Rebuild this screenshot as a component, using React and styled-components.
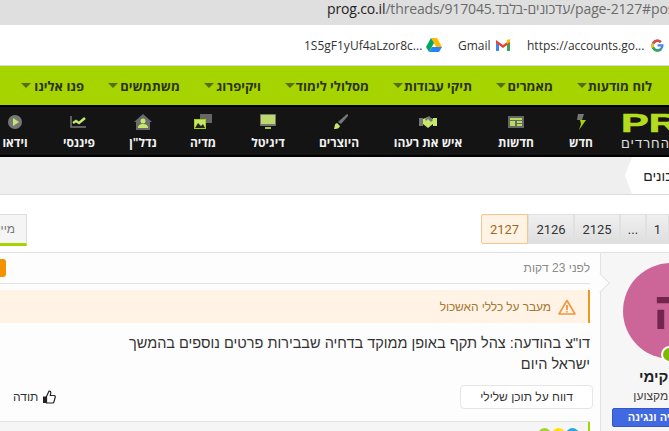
import React from 'react';
import styled, { createGlobalStyle } from 'styled-components';

const Global = createGlobalStyle`
  html, body { margin: 0; padding: 0; background: #fff; overflow: hidden; }
  #root { width: 669px; height: 431px; overflow: hidden; }
`;
const Frame = styled.div`width: 669px; height: 431px; overflow: hidden; font-family: "Liberation Sans", Arial, sans-serif; background: #fff;`;
const Canvas = styled.div`width: 900px; margin-left: -100px;`;
const AddressBar = styled.div`
  height: 25px; background: #dfdfdf; padding-left: 427px; direction: ltr; white-space: nowrap;
  font: 14px/17px "Open Sans", sans-serif; letter-spacing: -0.15px; color: #6a6a6a; overflow: hidden;
  b { font-weight: 400; color: #222; }
`;
const Bookmarks = styled.div`
  height: 41px; box-sizing: border-box; padding-left: 404px; display: flex; align-items: center; direction: ltr; white-space: nowrap;
  border-bottom: 1px solid #d8d8e0; font: 12px "Open Sans", sans-serif; color: #333;
`;
const Bookmark = styled.span`display: flex; align-items: center; margin-right: ${p => p.$mr || 10}px; width: ${p => p.$w}px;`;
const GreenNav = styled.nav`
  height: 39px; background: #a6d400; display: flex; align-items: center; direction: rtl; padding-right: 148px; gap: 24px;
`;
const GreenItem = styled.a`display: flex; align-items: center; width: ${p => p.$w}px; flex: none; font-weight: 700; font-size: 13px; color: #2c3212; white-space: nowrap; font-family: "Open Sans", "Liberation Sans", sans-serif;`;
const Caret = styled.i`width: 0; height: 0; border: 5px solid transparent; border-top: 5px solid #5a6b18; border-bottom: 0; display: block; margin-right: auto;`;
const BlackNav = styled.nav`
  height: 52px; box-sizing: border-box; background: #141414; border-top: 2px solid #000; border-bottom: 2px solid #000;
  display: flex; align-items: center; direction: rtl; padding-right: 131px; overflow: hidden;
`;
const Logo = styled.div`width: 48px; margin-left: 10px; flex: none; direction: ltr; padding-top: 3px;`;
const LogoMark = styled.div`font: 900 26px/19px "Liberation Sans", sans-serif; color: #b4dc1e; -webkit-text-stroke: 0.6px #b4dc1e; letter-spacing: 0; transform: scaleX(1.6); transform-origin: left; white-space: nowrap;`;
const LogoSub = styled.div`font: 13px/15px "Liberation Sans", sans-serif; color: #e0e0e0; letter-spacing: 1px; margin-top: 3px; white-space: nowrap;`;
const BlackItem = styled.a`display: flex; flex-direction: column; align-items: center; gap: 6px; width: ${p => p.$w}px; flex: none; color: #f2f2f2; font-weight: 700; font-size: 12px; line-height: 14px; white-space: nowrap; padding-top: 2px; font-family: "Open Sans", "Liberation Sans", sans-serif;`;
const NavIcon = styled.svg`width: 18px; height: 16px; display: block;`;
const Crumbs = styled.div`height: 38px; box-sizing: border-box; background: #efefef; border-bottom: 1px solid #ddd; direction: rtl; padding-right: 105px; display: flex;`;
const Crumb = styled.a`
  height: 37px; box-sizing: border-box; padding: 0 7px 0 0; width: 70px; flex: none; background: #fff; display: flex; align-items: center; font-size: 14px; color: #222; white-space: nowrap;
  clip-path: polygon(0 50%, 7px 0, 100% 0, 100% 100%, 7px 100%);
`;
const PageRow = styled.div`height: 57px; box-sizing: border-box; display: flex; justify-content: space-between; align-items: flex-start; padding: 19px 131px 0 0; direction: ltr;`;
const Tab = styled.div`height: 32px; width: 127px; box-sizing: border-box; direction: rtl; overflow: hidden;
  background: #f5f5f5; border: 1px solid #ddd; border-bottom: 3px solid #a6d400; font-size: 12px; color: #777; padding: 7px 11px 0 0; white-space: nowrap;`;
const Pager = styled.div`display: flex; direction: ltr; height: 30px;`;
const PageCell = styled.a`
  box-sizing: border-box; width: ${p => p.$w}px; height: 30px; display: flex; align-items: center; justify-content: center; font: 13px "Roboto", sans-serif;
  color: ${p => p.$on ? '#a5671f' : '#333'}; background: ${p => p.$on ? '#fff3e6' : 'linear-gradient(#f0f0f0,#dedede)'};
  border: 1px solid ${p => p.$on ? '#f5c78c' : '#e0e0e0'}; ${p => p.$on && 'border-radius: 2px 0 0 2px;'}
`;
const Main = styled.div`display: flex; direction: rtl; border-top: 1px solid #e2e2e2; height: 179px; padding-right: 60px;`;
const Side = styled.aside`width: 140px; flex: none; background: #f6f6f6; border-left: 1px solid #e2e2e2; box-sizing: border-box; display: flex; flex-direction: column; align-items: center; padding-top: 10px;`;
const Avatar = styled.div`width: 96px; height: 96px; border-radius: 50%; background: #cc6699; color: #73264d; display: flex; align-items: center; justify-content: center; font-size: 52px; font-weight: 700; position: relative;`;
const Online = styled.i`position: absolute; left: 38px; bottom: -4px; width: 13px; height: 13px; border-radius: 50%; background: #7fb800; border: 2px solid #fff;`;
const Name = styled.div`font: 700 15px/17px "Liberation Sans", sans-serif; color: #222; margin-top: 9px; white-space: nowrap;`;
const Role = styled.div`font-size: 12px; line-height: 14px; color: #444; margin-top: 4px; white-space: nowrap;`;
const RoleBtn = styled.div`width: 118px; height: 19px; box-sizing: border-box; background: #4169e1; color: #fff; font: 700 11px/17px "Liberation Sans", sans-serif; text-align: center; border-radius: 2px; border: 1px solid #3558c0; margin-top: 5px; white-space: nowrap;`;
const Post = styled.article`flex: 1; min-width: 0; background: #fdfdfd; padding: 0 10px 0 0; direction: rtl; position: relative;`;
const PostHead = styled.div`height: 31px; box-sizing: border-box; border-bottom: 1px solid #e2e2e2; font-size: 12px; color: #8a8a8a; display: flex; align-items: center; justify-content: space-between; position: relative;`;
const Tail = styled.i`position: absolute; right: -17px; top: 23px; width: 14px; height: 14px; box-sizing: border-box; transform: rotate(45deg); background: #fdfdfd; border: 1px solid #e2e2e2; border-left: 0; border-bottom: 0;`;
const Badge = styled.b`width: 27px; height: 18px; background: #f39200; border-radius: 3px; margin-left: 79px; display: block;`;
const Notice = styled.div`margin-top: 6px; height: 33px; background: #fff3e6; border-right: 2px solid #f0961e; display: flex; align-items: center; gap: 7px; padding-right: 12px; font-size: 12px; letter-spacing: -0.1px; color: #a5762f; box-sizing: border-box;`;
const Body = styled.p`margin: 10px 0 0; font: 14.5px/21px "Liberation Sans", sans-serif; color: #333; width: 470px;`;
const Actions = styled.div`display: flex; justify-content: space-between; align-items: center; margin: 10px -3px 0 113px; height: 24px;`;
const ReportBtn = styled.button`width: 133px; height: 24px; background: #fff; border: 1px solid #e6e6e6; border-radius: 4px; font: 12px "Liberation Sans", sans-serif; color: #333; direction: rtl;`;
const Thanks = styled.span`display: flex; align-items: center; gap: 4px; font-size: 12px; color: #333;`;
const Footer = styled.div`margin-top: 12px; height: 20px; background: #f5f5f5; border-top: 1px solid #e2e2e2;`;
const FooterBar = styled.div`height: 20px; border-right: 2px solid #a6d400; display: flex; gap: 1px; padding: 6px 9px 0 0;`;
const Dot = styled.i`width: 13px; height: 13px; border-radius: 50%; background: ${p => p.$c}; display: block;`;

const ICONS = {
  bolt: <><path d="M6 0h6l-2 6H5z" fill="#777"/><path d="M8 6h6l-7 10 2-6z" fill="#a6d400"/></>,
  news: <><rect x="1" y="2" width="16" height="12" fill="#666"/><rect x="3" y="4" width="12" height="2" fill="#b5dc5a"/><rect x="3" y="7" width="5" height="5" fill="#b5dc5a"/><rect x="10" y="7" width="5" height="2" fill="#b5dc5a"/><rect x="10" y="10" width="5" height="2" fill="#b5dc5a"/></>,
  hands: <><rect x="0" y="4" width="4" height="8" fill="#777"/><rect x="14" y="4" width="4" height="8" fill="#c5e86c"/><path d="M4 5l5-2 5 2v5l-5 4-5-4z" fill="#c5e86c"/><path d="M6 5l4-3 4 4-2 2-3-3-2 2z" fill="#777"/></>,
  brush: <><path d="M17 0c1 0 1 1 1 2l-7 8-3-2z" fill="#777"/><path d="M7 9l3 3c-1 3-4 3-6 3 1-2 0-5 3-6z" fill="#c5e86c"/></>,
  screen: <><rect x="1" y="0" width="16" height="12" rx="1" fill="#777"/><rect x="2" y="1" width="14" height="9" fill="#bcd96a"/><rect x="6" y="13" width="6" height="2" fill="#a6c84a"/></>,
  media: <><rect x="6" y="0" width="12" height="9" fill="#666"/><rect x="0.500" y="5.500" width="11" height="9" fill="#c5e86c" stroke="#a6d400"/><path d="M1 14l3-5 3 3 2-2 2 4z" fill="#222"/></>,
  home: <><path d="M9 0 0 8h2v8h14V8h2z" fill="#6b6b6b"/><circle cx="9" cy="7" r="2.500" fill="#c5e86c"/><path d="M4 14c0-3 2-4 5-4s5 1 5 4z" fill="#c5e86c"/></>,
  chart: <><path d="M1 2v11h15" stroke="#777" fill="none" strokeWidth="1.500"/><path d="M3 9l3-2 3 2 6-5" stroke="#c5e86c" fill="none" strokeWidth="2.500"/></>,
  play: <><circle cx="9" cy="8" r="7" fill="#777"/><path d="M7 4l6 4-6 4z" fill="#c5e86c"/></>,
};
const blackItems = [['bolt','חדש',60],['news','חדשות',70],['hands','איש את רעהו',106],['brush','היוצרים',72],['screen','דיגיטל',70],['media','מדיה',60],['home','נדל"ן',60],['chart','פיננסי',68],['play','וידאו',60]];
const greenItems = [['לוח מודעות',75],['מאמרים',57],['תיקי עבודות',79],['מסלולי לימוד',84],['ויקיפרוג',57],['משתמשים',72],['פנו אלינו',63]];

export default function App() {
  return (
    <Frame>
      <Global />
      <Canvas>
        <AddressBar><b>prog.co.il</b>/threads/917045.עדכונים-בלבד/page-2127#post-1</AddressBar>
        <Bookmarks>
          <Bookmark $w={112} $mr={10}>1S5gF1yUf4aLzor8c...</Bookmark>
          <Bookmark $w={16} $mr={16}><svg width="16" height="14" viewBox="0 0 16 14"><path d="M5 0h6l5 9h-6z" fill="#ffba00"/><path d="M5 0 0 9l3 5 5-9z" fill="#00a85d"/><path d="M3 14h10l3-5H6z" fill="#2684fc"/></svg></Bookmark>
          <Bookmark $w={30} $mr={8}>Gmail</Bookmark>
          <Bookmark $w={14} $mr={17}><svg width="14" height="12" viewBox="0 0 14 12"><path d="M0 2v10h3V4z" fill="#4285f4"/><path d="M11 4v8h3V2z" fill="#34a853"/><path d="M0 1 7 6l7-5v3L7 9 0 4z" fill="#ea4335"/><path d="M11 1l3-1v3l-3 2z" fill="#fbbc04"/></svg></Bookmark>
          <Bookmark $w={113} $mr={11}>https://accounts.go...</Bookmark>
          <svg width="13" height="13" viewBox="0 0 13 13"><path d="M6.500 5.300h6c.4 3.800-2 7.200-6 7.200A6 6 0 1 1 10.600 2.200L8.900 3.900A3.600 3.600 0 1 0 10 7.400H6.500z" fill="#4285f4"/><path d="M1.100 3.500A6 6 0 0 1 10.600 2.200L8.900 3.900a3.600 3.600 0 0 0-5.700.900z" fill="#ea4335"/><path d="M.9 9A6 6 0 0 1 .9 4l2.300 1a3.600 3.600 0 0 0 0 3z" fill="#fbbc04"/><path d="M1 9l2.200-1A3.600 3.600 0 0 0 9 9.500l1.900 1.500A6 6 0 0 1 1 9z" fill="#34a853"/></svg>
        </Bookmarks>
        <GreenNav>
          {greenItems.map(([t, w]) => <GreenItem key={t} $w={w}>{t}<Caret /></GreenItem>)}
        </GreenNav>
        <BlackNav>
          <Logo><LogoMark>PROG</LogoMark><LogoSub>החרדים</LogoSub></Logo>
          {blackItems.map(([i, t, w]) => <BlackItem key={t} $w={w}><NavIcon viewBox="0 0 18 16">{ICONS[i]}</NavIcon>{t}</BlackItem>)}
        </BlackNav>
        <Crumbs><Crumb>עדכונים</Crumb></Crumbs>
        <PageRow>
          <Tab>מיין לפי</Tab>
          <Pager>
            <PageCell $w={47} $on>2127</PageCell>
            <PageCell $w={46}>2126</PageCell>
            <PageCell $w={46}>2125</PageCell>
            <PageCell $w={26}>...</PageCell>
            <PageCell $w={23}>1</PageCell>
          </Pager>
        </PageRow>
        <Main>
          <Side>
            <Avatar>ה<Online /></Avatar>
            <Name>יוסף קימי</Name>
            <Role>מוזיקאי מקצוען</Role>
            <RoleBtn>קומפוזיציה ונגינה</RoleBtn>
          </Side>
          <Post>
            <PostHead>לפני 23 דקות<Badge /><Tail /></PostHead>
            <Notice>
              <svg width="18" height="16" viewBox="0 0 18 16"><path d="M9 1.500 1 15h16z" fill="none" stroke="#f0963c" strokeWidth="1.600" strokeLinejoin="round"/><path d="M9 6v5M9 12.200v1.300" stroke="#f0963c" strokeWidth="1.800"/></svg>
              מעבר על כללי האשכול
            </Notice>
            <Body>דו"צ בהודעה: צהל תקף באופן ממוקד בדחיה שבבירות פרטים נוספים בהמשך ישראל היום</Body>
            <Actions>
              <ReportBtn>דווח על תוכן שלילי</ReportBtn>
              <Thanks>
                <svg width="14" height="14" viewBox="0 0 14 14"><path d="M4.500 6.500 7 1c1.500 0 2 1 1.700 2.500L8.300 5.500H12c1 0 1.500 1 1.200 1.800l-1.400 5c-.2.500-.6.700-1.100.700H4.500z" fill="none" stroke="#222" strokeWidth="1.200"/><rect x="1" y="6.500" width="3" height="6.500" fill="#222"/></svg>
                תודה
              </Thanks>
            </Actions>
            <Footer><FooterBar><Dot $c="#2ba5e0"/><Dot $c="#ffe000"/><Dot $c="#a5d233"/></FooterBar></Footer>
          </Post>
        </Main>
      </Canvas>
    </Frame>
  );
}
